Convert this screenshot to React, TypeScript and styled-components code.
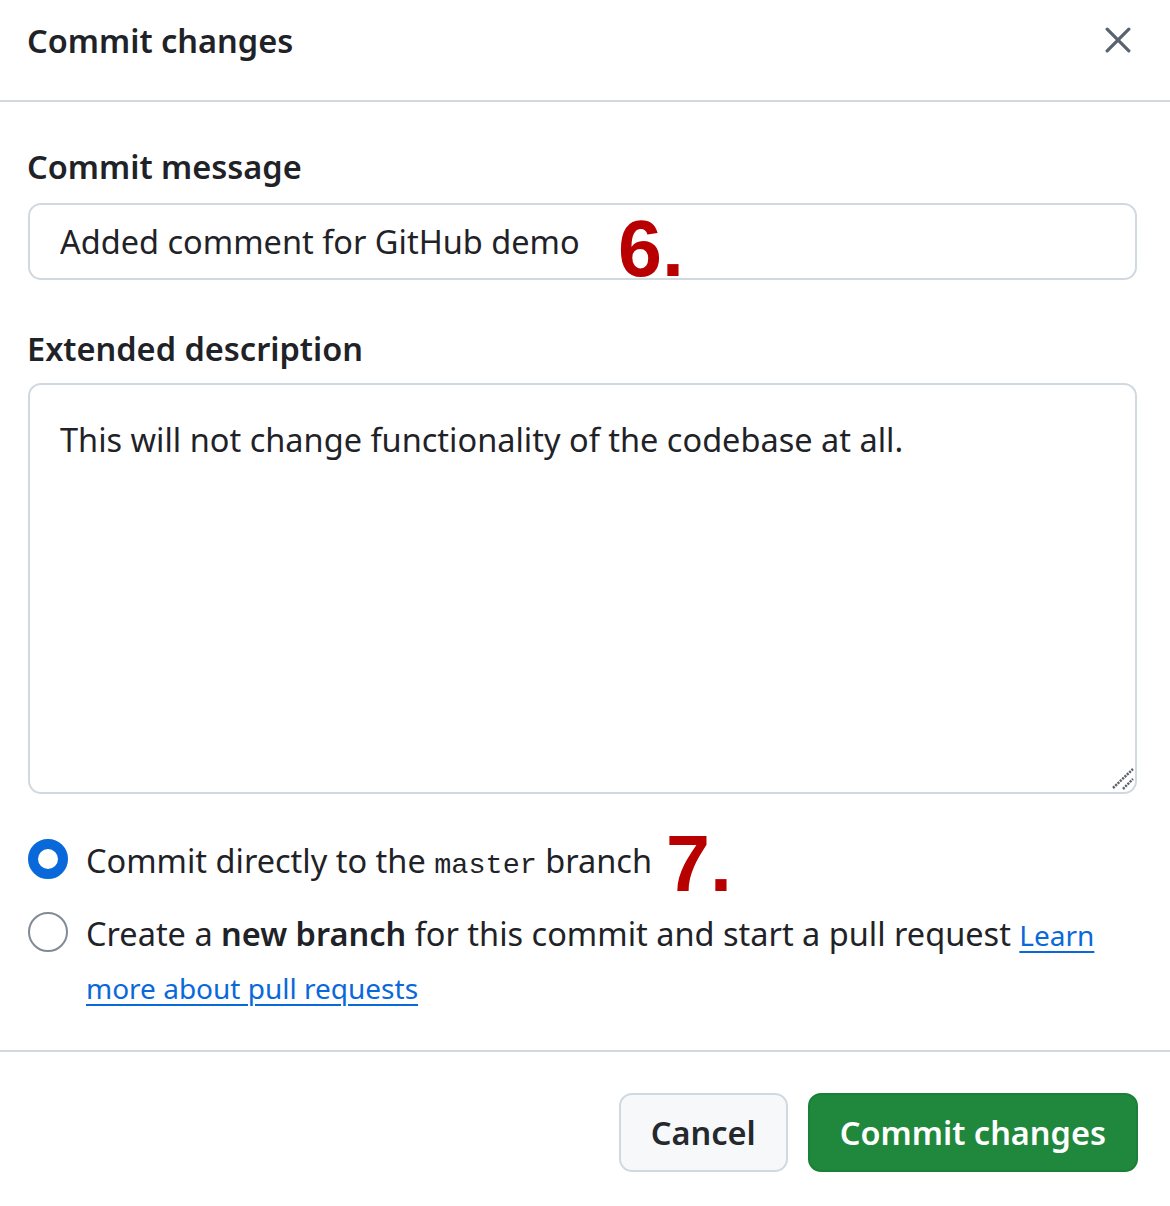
import React from "react";
import styled, { createGlobalStyle } from "styled-components";

const Global = createGlobalStyle`
  html, body { margin: 0; padding: 0; background: #ffffff; }
  body { font-family: "Noto Sans", "Open Sans", sans-serif; color: #1f2328; }
  * { box-sizing: border-box; }
`;

const Dialog = styled.div`
  width: 1170px;
  height: 1206px;
  display: flex;
  flex-direction: column;
  background: #ffffff;
`;

const Header = styled.header`
  height: 102px;
  border-bottom: 2px solid #d1d9e0;
  display: flex;
  align-items: flex-start;
  justify-content: space-between;
  padding: 21px 34px 0 27px;
`;

const Title = styled.h1`
  margin: 0;
  font-size: 32.5px;
  line-height: 40px;
  font-weight: 600;
  color: #1f2328;
`;

const CloseButton = styled.button`
  border: 0;
  background: none;
  padding: 0;
  width: 36px;
  height: 36px;
  margin-top: 1px;
  display: flex;
  align-items: center;
  justify-content: center;
  color: #59636e;
  cursor: pointer;
`;

const Body = styled.div`
  padding: 45px 33px 0 27px;
  display: flex;
  flex-direction: column;
`;

const Label = styled.label<{ $top?: number; $gap: number }>`
  display: block;
  font-size: 32.5px;
  line-height: 40px;
  font-weight: 600;
  margin-top: ${(p) => p.$top ?? 0}px;
  margin-bottom: ${(p) => p.$gap}px;
`;

const FieldWrap = styled.div`
  position: relative;
  margin-left: 1px;
`;

const TextInput = styled.input`
  display: block;
  width: 100%;
  height: 77px;
  border: 2px solid #d1d9e0;
  border-radius: 13px;
  padding: 0 30px;
  font-family: inherit;
  font-size: 32.5px;
  color: #1f2328;
  background: #ffffff;
  outline: none;
`;

const TextArea = styled.textarea`
  display: block;
  width: 100%;
  height: 411px;
  border: 2px solid #d1d9e0;
  border-radius: 13px;
  padding: 31px 30px;
  font-family: inherit;
  font-size: 32.5px;
  line-height: 48px;
  color: #1f2328;
  background: #ffffff;
  outline: none;
  resize: none;
`;

const Resizer = styled.svg`
  position: absolute;
  right: 2px;
  bottom: 4px;
  width: 24px;
  height: 24px;
  pointer-events: none;
`;

const Annotation = styled.span<{ $left: number; $top: number }>`
  position: absolute;
  left: ${(p) => p.$left}px;
  top: ${(p) => p.$top}px;
  font-family: "Liberation Sans", Arial, sans-serif;
  font-weight: 700;
  font-size: 79px;
  line-height: 1;
  color: #b80000;
  pointer-events: none;
`;

const RadioGroup = styled.div`
  margin-top: 40px;
  display: flex;
  flex-direction: column;
  gap: 20px;
`;

const RadioRow = styled.div`
  position: relative;
  display: flex;
  align-items: flex-start;
  gap: 18px;
  margin-left: 1px;
`;

const RadioCircle = styled.span<{ $checked?: boolean }>`
  flex: none;
  width: 40px;
  height: 40px;
  margin-top: 5px;
  border-radius: 50%;
  background: #ffffff;
  border: ${(p) => (p.$checked ? "10px solid #0969da" : "2px solid #818b98")};
`;

const RadioText = styled.span`
  display: block;
  font-size: 32.5px;
  line-height: 53px;
  color: #1f2328;
`;

const Strong = styled.strong`
  font-weight: 600;
`;

const Code = styled.code`
  font-family: "Liberation Mono", "DejaVu Sans Mono", monospace;
  font-size: 28.5px;
  line-height: 1;
`;

const Link = styled.a`
  color: #0969da;
  font-size: 28px;
  line-height: 1;
  text-decoration: underline;
  text-decoration-thickness: 2px;
  text-underline-offset: 5px;
`;

const Footer = styled.footer`
  margin-top: 37px;
  border-top: 2px solid #d1d9e0;
  padding: 41px 32px 0 0;
  display: flex;
  justify-content: flex-end;
  gap: 20px;
`;

const Button = styled.button<{ $primary?: boolean }>`
  height: 79px;
  padding: 0 ${(p) => (p.$primary ? 30 : 30)}px;
  border-radius: 13px;
  font-family: inherit;
  font-size: 32.5px;
  font-weight: 600;
  cursor: pointer;
  border: 2px solid ${(p) => (p.$primary ? "#1a7f37" : "#d1d9e0")};
  background: ${(p) => (p.$primary ? "#1f883d" : "#f6f8fa")};
  color: ${(p) => (p.$primary ? "#ffffff" : "#25292e")};
`;

export default function App() {
  return (
    <>
      <Global />
      <Dialog>
        <Header>
          <Title>Commit changes</Title>
          <CloseButton aria-label="Close">
            <svg width="26" height="26" viewBox="0 0 24 24" fill="none">
              <path d="M2 2 L22 22 M22 2 L2 22" stroke="currentColor" strokeWidth="3" strokeLinecap="round" />
            </svg>
          </CloseButton>
        </Header>
        <Body>
          <Label $gap={16}>Commit message</Label>
          <FieldWrap>
            <TextInput readOnly value="Added comment for GitHub demo" />
            <Annotation $left={590} $top={6}>6.</Annotation>
          </FieldWrap>
          <Label $top={49} $gap={14}>Extended description</Label>
          <FieldWrap>
            <TextArea readOnly value="This will not change functionality of the codebase at all." />
            <Resizer viewBox="0 0 24 24">
              <path d="M2 22 L22 3 M12 23 L22 13" stroke="#59636e" strokeWidth="2.5" strokeDasharray="2.2 1" />
            </Resizer>
          </FieldWrap>
          <RadioGroup>
            <RadioRow>
              <RadioCircle $checked />
              <RadioText>
                Commit directly to the <Code>master</Code> branch
              </RadioText>
              <Annotation $left={638} $top={-10}>7.</Annotation>
            </RadioRow>
            <RadioRow>
              <RadioCircle />
              <RadioText>
                Create a <Strong>new branch</Strong> for this commit and start a pull request{" "}
                <Link href="#">Learn more about pull requests</Link>
              </RadioText>
            </RadioRow>
          </RadioGroup>
        </Body>
        <Footer>
          <Button>Cancel</Button>
          <Button $primary>Commit changes</Button>
        </Footer>
      </Dialog>
    </>
  );
}
